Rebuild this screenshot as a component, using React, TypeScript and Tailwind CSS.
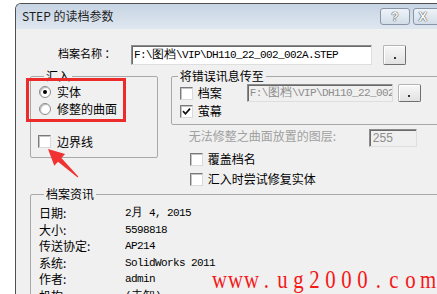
import type { ReactNode } from 'react';

// classic win32 sunken edit field
function Field({ className = '', children }: { className?: string; children?: ReactNode }) {
  return (
    <div
      className={`flex items-center overflow-hidden whitespace-nowrap border border-t-[#8c8c8c] border-l-[#8c8c8c] border-r-[#dedede] border-b-[#dedede] shadow-[inset_1px_1px_0_#6a6a6a] ${className}`}
    >
      {children}
    </div>
  );
}

function DotButton({ className = '' }: { className?: string }) {
  return (
    <div
      className={`flex items-end justify-center rounded-[2px] border border-[#b4b4b4] border-b-[#6f6f6f] border-r-[#6f6f6f] bg-gradient-to-b from-[#f7f7f7] to-[#e2e2e2] shadow-[inset_1px_1px_0_#ffffff] ${className}`}
    >
      <span className="h-[2px] w-[2px] bg-[#333]" />
    </div>
  );
}

function Check({ on = false }: { on?: boolean }) {
  return (
    <span className="flex h-[13px] w-[13px] shrink-0 items-center justify-center border border-t-[#7a7a7a] border-l-[#7a7a7a] border-b-[#dadada] border-r-[#dadada] bg-white shadow-[inset_1px_1px_0_#c4c4c4]">
      {on && (
        <svg viewBox="0 0 9 9" className="h-[9px] w-[9px]">
          <path d="M1 4.2 L3.5 6.8 L8 1.6" fill="none" stroke="#111" strokeWidth="1.7" />
        </svg>
      )}
    </span>
  );
}

function Radio({ on = false }: { on?: boolean }) {
  return (
    <span className="flex h-[12px] w-[12px] shrink-0 items-center justify-center rounded-full border border-[#8a8a8a] bg-white shadow-[inset_1px_1px_1px_#b8b8b8]">
      {on && <span className="h-[4px] w-[4px] rounded-full bg-black" />}
    </span>
  );
}

const info: [string, ReactNode][] = [
  ['日期:', <>2<span className="text-[12px] tracking-normal">月</span> 4, 2015</>],
  ['大小:', '5598818'],
  ['传送协定:', 'AP214'],
  ['系统:', 'SolidWorks 2011'],
  ['作者:', 'admin'],
  ['机构:', <>(<span className="text-[12px] tracking-normal">未知</span>)</>],
];

const mark = 'www.ug2000.com'.split('');

export default function App() {
  return (
    <div className="relative h-[294px] w-[437px] overflow-hidden bg-white font-['Noto_Sans_CJK_SC',sans-serif] text-[12px] leading-[14px] text-black">
      <div className="ml-[15px] mt-[3px] h-[300px] w-[440px] rounded-tl-[6px] border-l border-t border-[#4f4f4f] bg-[#f0f0f0]">
        {/* title bar */}
        <div className="flex h-[25px] items-start rounded-tl-[5px] bg-gradient-to-b from-[#c7d4e3] to-[#dfe7f0]">
          <div className="w-[370px] pl-[6px] pt-[5px] text-[#1e1e1e]">STEP 的读档参数</div>
          <div className="mt-[4px] flex h-[17px] w-[30px] items-center justify-center rounded-[3px] border border-[#8795a6] bg-gradient-to-b from-[#eef3f8] to-[#d3dde8] font-['Liberation_Sans',sans-serif] text-[12px] font-bold text-[#f8f8f8] [text-shadow:0_0_1px_#333,0_0_1px_#333]">
            ?
          </div>
          <div className="ml-[3px] mt-[4px] flex h-[17px] w-[43px] items-center rounded-[3px] border border-[#8795a6] bg-gradient-to-b from-[#eef3f8] to-[#d3dde8] pl-[5px] font-['Liberation_Sans',sans-serif] text-[13px] font-bold text-[#f8f8f8] [text-shadow:0_0_1px_#333,0_0_1px_#333]">
            X
          </div>
        </div>

        <div className="pt-[16px]">
          {/* file name row */}
          <div className="flex h-[20px] items-center">
            <span className="mb-[5px] w-[115px] pl-[42px] text-[11px]">档案名称 ：</span>
            <Field className="h-[20px] w-[241px] bg-white pl-[2px] font-['Liberation_Mono',monospace] text-[11px] tracking-[-0.6px]">
              F:\<span className="text-[12px] tracking-normal">图档</span>\VIP\DH110_22_002_002A.STEP
            </Field>
            <DotButton className="ml-[11px] h-[20px] w-[23px] pb-[5px]" />
          </div>

          <div className="mt-[4px] flex items-start pl-[14px]">
            {/* import group */}
            <fieldset className="h-[89px] w-[134px] rounded-[2px] border border-[#a8a8a8] px-[8px]">
              <legend className="ml-[5px] px-[2px] leading-[14px]">汇入</legend>
              <div className="flex h-[17px] items-center gap-[6px]">
                <Radio on />
                <span>实体</span>
              </div>
              <div className="flex h-[17px] items-center gap-[6px]">
                <Radio />
                <span>修整的曲面</span>
              </div>
              <div className="mt-[16px] -ml-[1px] flex h-[17px] items-center gap-[6px]">
                <Check />
                <span>边界线</span>
              </div>
            </fieldset>

            {/* right column */}
            <div className="ml-[13px] w-[300px]">
              <fieldset className="h-[56px] rounded-[2px] border border-[#a8a8a8]">
                <legend className="ml-[6px] px-[2px] leading-[14px]">将错误讯息传至</legend>
                <div className="mt-[1px] flex h-[18px] items-center pl-[8px]">
                  <Check />
                  <span className="ml-[5px] w-[49px]">档案</span>
                  <Field className="h-[18px] w-[146px] bg-[#f0f0f0] pl-[2px] font-['Liberation_Mono',monospace] text-[11px] tracking-[-0.6px] text-[#8d8d8d]">
                    F:\<span className="text-[12px] tracking-normal">图档</span>\VIP\DH110_22_002_002A.STEP
                  </Field>
                  <DotButton className="ml-[5px] h-[18px] w-[23px] pb-[4px]" />
                </div>
                <div className="flex h-[18px] items-center pl-[8px]">
                  <Check on />
                  <span className="ml-[5px]">萤幕</span>
                </div>
              </fieldset>

              <div className="mt-[4px] flex h-[18px] items-center pl-[18px]">
                <span className="-mt-[4px] w-[180px] text-[#a0a0a0]">无法修整之曲面放置的图层:</span>
                <Field className="h-[18px] w-[48px] bg-[#f0f0f0] pl-[3px] font-['Liberation_Sans',sans-serif] text-[12px] text-[#8d8d8d]">
                  255
                </Field>
              </div>

              <div className="mt-[2px] flex h-[20px] items-center pl-[19px]">
                <Check />
                <span className="ml-[5px]">覆盖档名</span>
              </div>
              <div className="flex h-[20px] items-center pl-[19px]">
                <Check />
                <span className="ml-[5px]">汇入时尝试修复实体</span>
              </div>
            </div>
          </div>

          {/* file info group */}
          <fieldset className="-mt-[2px] ml-[14px] h-[120px] w-[420px] rounded-[2px] border border-[#a8a8a8] px-[8px] pt-[4px]">
            <legend className="ml-[5px] px-[2px] leading-[14px]">档案资讯</legend>
            {info.map(([label, value]) => (
              <div key={label} className="flex h-[16.5px] items-center">
                <span className="w-[86px]">{label}</span>
                <span className="font-['Liberation_Mono',monospace] text-[11px] tracking-[-0.6px]">{value}</span>
              </div>
            ))}
          </fieldset>
        </div>
      </div>

      {/* annotations */}
      <div className="absolute left-[26px] top-[78px] h-[44px] w-[100px] border-[3px] border-[#ec2b2b]" />
      <svg className="absolute left-[44px] top-[144px] h-[38px] w-[40px]" viewBox="0 0 40 38">
        <polygon
          points="4,5 21.1,10.1 17.4,14.1 34.3,32.6 33.7,33.4 14,17.7 10.3,21.7"
          fill="#f03232"
        />
      </svg>
      <div className="absolute left-[210px] top-[266px] flex font-['Liberation_Serif',serif] text-[26px] leading-[27px] text-[#f41818]">
        {mark.map((c, i) => (
          <span key={i} className="inline-block w-[16px] text-center">
            <span className="inline-block scale-x-[0.8]">{c}</span>
          </span>
        ))}
      </div>
    </div>
  );
}
